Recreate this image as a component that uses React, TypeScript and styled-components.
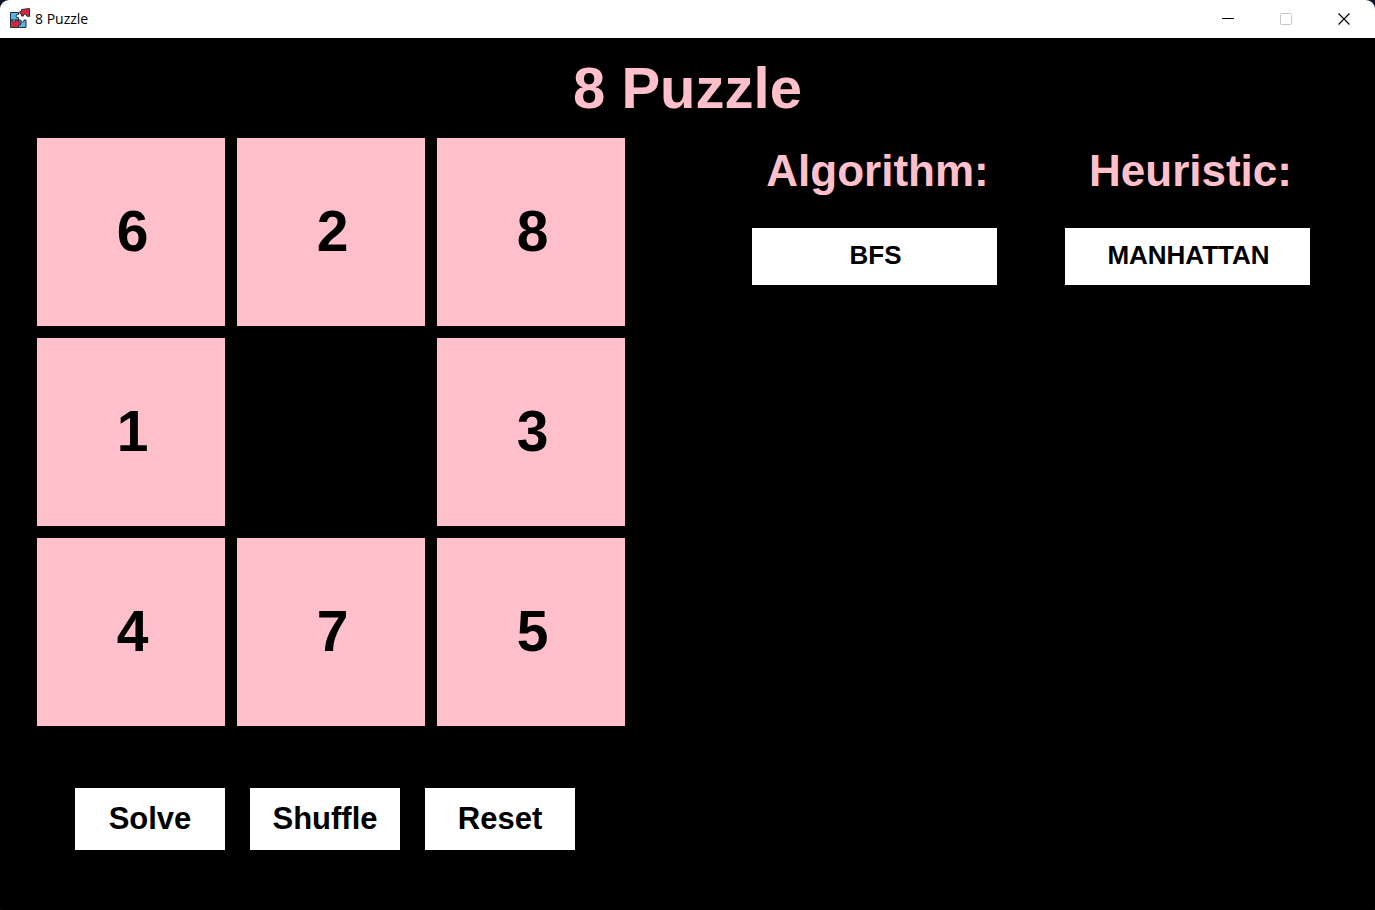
import React, { useState } from "react";
import styled, { createGlobalStyle } from "styled-components";

const pink = "#ffc0cb";

const GlobalStyle = createGlobalStyle`
  *, *::before, *::after { box-sizing: border-box; }
  body {
    margin: 0;
    background: #0b1526;
    font-family: "Liberation Sans", Arial, sans-serif;
  }
  button { font-family: inherit; }
`;

const Window = styled.div`
  display: flex;
  flex-direction: column;
  min-height: 100vh;
  overflow: hidden;
  background: #000;
  border-radius: 9px 9px 2px 2px;
`;

const TitleBar = styled.header`
  display: flex;
  align-items: center;
  height: 38px;
  padding: 0 1px 0 9px;
  background: #fff;
  color: #000;
`;

const AppName = styled.span`
  flex: 1;
  padding-left: 4px;
  font-family: "Open Sans", "Noto Sans", sans-serif;
  font-size: 14px;
  line-height: 20px;
`;

const WindowButton = styled.button`
  display: grid;
  place-items: center;
  width: 58px;
  height: 38px;
  padding: 0 2px 0 0;
  border: 0;
  background: transparent;
  color: #000;

  &:disabled { color: #c8c8c8; }
`;

const Content = styled.main`
  flex: 1;
  padding: 16px 65px 60px 37px;
`;

const Heading = styled.h1`
  margin: 0 0 16px;
  padding-left: 28px;
  color: ${pink};
  font-size: 58px;
  line-height: 68px;
  text-align: center;
`;

const Columns = styled.div`
  display: grid;
  grid-template-columns: minmax(0, 588px) minmax(0, 1fr);
  column-gap: 127px;
  align-items: start;
`;

const Board = styled.div`
  display: grid;
  grid-template-columns: repeat(3, minmax(0, 1fr));
  gap: 12px;
`;

const Tile = styled.button`
  aspect-ratio: 1;
  padding: 0 0 3px 3px;
  border: 0;
  background: ${pink};
  color: #000;
  font-size: 57px;
  font-weight: bold;
  line-height: 64px;
`;

const Blank = styled.div`
  aspect-ratio: 1;
`;

const Actions = styled.div`
  display: flex;
  gap: 25px;
  padding: 62px 0 0 38px;
`;

const WhiteButton = styled.button`
  border: 0;
  background: #fff;
  color: #000;
  font-weight: bold;
`;

const ActionButton = styled(WhiteButton)`
  width: 150px;
  height: 62px;
  padding: 0;
  font-size: 31px;
`;

const Options = styled.div`
  display: grid;
  grid-template-columns: repeat(2, minmax(0, 1fr));
  column-gap: 68px;
  padding-top: 8px;
`;

const Option = styled.section`
  display: flex;
  flex-direction: column;
`;

const OptionLabel = styled.h2`
  margin: 0 0 32px;
  padding-left: 6px;
  color: ${pink};
  font-size: 44px;
  line-height: 50px;
  text-align: center;
  white-space: nowrap;
`;

const OptionButton = styled(WhiteButton)`
  height: 57px;
  padding: 0 0 2px 2px;
  font-size: 26px;
`;

const start = [6, 2, 8, 1, 0, 3, 4, 7, 5];

function PuzzleIcon() {
  return (
    <svg width="22" height="22" viewBox="0 0 22 22" aria-hidden="true">
      <g stroke="#22303c" strokeWidth="1" strokeLinejoin="round">
        <path d="M1.5 4.5H9.500V6.500Q7 6 7 8Q7 10 9.500 9.500V12H1.500Z" fill="#58b4e5" />
        <path d="M9.500 12H12Q11.500 14 13.500 14Q15.500 14 15 12H17V19.500H9.500Z" fill="#58b4e5" />
        <path d="M1.500 12H3.500Q3 14 5 14Q7 14 6.500 12H9.500V14Q12 13.500 12 15.500Q12 17.500 9.500 17V19.500H1.500Z" fill="#dc2440" />
        <path d="M12.500 1.500L20.500 .5V8.500L17.500 8Q18 6 16 6Q14 6 14.500 8H12.500V6Q10.500 6 10.500 4.500Q10.500 3 12.500 3.500Z" fill="#dc2440" />
      </g>
    </svg>
  );
}

export default function App() {
  const [tiles, setTiles] = useState(start);
  const [algorithm, setAlgorithm] = useState("BFS");
  const [heuristic, setHeuristic] = useState("MANHATTAN");

  const move = (index: number) => {
    const blank = tiles.indexOf(0);
    const distance =
      Math.abs((index % 3) - (blank % 3)) +
      Math.abs(Math.floor(index / 3) - Math.floor(blank / 3));
    if (distance !== 1) return;
    const next = [...tiles];
    next[blank] = tiles[index];
    next[index] = 0;
    setTiles(next);
  };

  // An even number of swaps keeps the board solvable.
  const shuffle = () => setTiles(([a, b, c, ...rest]) => [b, c, a, ...rest]);

  return (
    <>
      <GlobalStyle />
      <Window>
        <TitleBar>
          <PuzzleIcon />
          <AppName>8 Puzzle</AppName>
          <WindowButton aria-label="Minimize">
            <svg width="14" height="14" stroke="currentColor" fill="none">
              <path d="M1 6.5H13" />
            </svg>
          </WindowButton>
          <WindowButton aria-label="Maximize" disabled>
            <svg width="14" height="14" stroke="currentColor" fill="none">
              <rect x="1.5" y="1.500" width="11" height="11" rx="1" />
            </svg>
          </WindowButton>
          <WindowButton aria-label="Close">
            <svg width="14" height="14" stroke="currentColor" strokeWidth="1.200" fill="none">
              <path d="M1.500 1.500L12.500 12.500M12.500 1.500L1.500 12.500" />
            </svg>
          </WindowButton>
        </TitleBar>
        <Content>
          <Heading>8 Puzzle</Heading>
          <Columns>
            <div>
              <Board>
                {tiles.map((n, i) =>
                  n === 0 ? <Blank key={n} /> : <Tile key={n} onClick={() => move(i)}>{n}</Tile>
                )}
              </Board>
              <Actions>
                <ActionButton onClick={() => setTiles([1, 2, 3, 4, 5, 6, 7, 8, 0])}>Solve</ActionButton>
                <ActionButton onClick={shuffle}>Shuffle</ActionButton>
                <ActionButton onClick={() => setTiles(start)}>Reset</ActionButton>
              </Actions>
            </div>
            <Options>
              <Option>
                <OptionLabel id="algorithm">Algorithm:</OptionLabel>
                <OptionButton
                  aria-describedby="algorithm"
                  onClick={() => setAlgorithm(algorithm === "BFS" ? "DFS" : "BFS")}
                >
                  {algorithm}
                </OptionButton>
              </Option>
              <Option>
                <OptionLabel id="heuristic">Heuristic:</OptionLabel>
                <OptionButton
                  aria-describedby="heuristic"
                  onClick={() => setHeuristic(heuristic === "MANHATTAN" ? "EUCLIDEAN" : "MANHATTAN")}
                >
                  {heuristic}
                </OptionButton>
              </Option>
            </Options>
          </Columns>
        </Content>
      </Window>
    </>
  );
}
